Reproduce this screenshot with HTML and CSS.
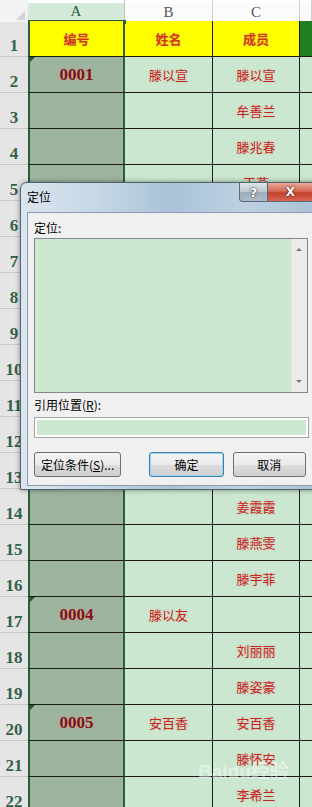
FILE: index.html
```html
<!DOCTYPE html>
<html lang="zh-CN">
<head>
    <meta charset="UTF-8">
    <meta name="viewport" content="width=device-width, initial-scale=1.0">
    <title>定位</title>
    <link rel="stylesheet" href="styles.css">
</head>
<body>
    <div class="sheet">
        <div class="row head-row">
            <div class="corner"></div>
            <div class="col-head col-a">A</div>
            <div class="col-head">B</div>
            <div class="col-head">C</div>
            <div class="col-head"></div>
        </div>

        <div class="row title-row">
            <div class="rh">1</div>
            <div class="cell a">编号</div>
            <div class="cell">姓名</div>
            <div class="cell">成员</div>
            <div class="cell d"></div>
        </div>
        <div class="row">
            <div class="rh">2</div>
            <div class="cell a flag"><span class="code">0001</span></div>
            <div class="cell">滕以宣</div>
            <div class="cell">滕以宣</div>
            <div class="cell d"></div>
        </div>
        <div class="row">
            <div class="rh">3</div>
            <div class="cell a"></div>
            <div class="cell"></div>
            <div class="cell">牟善兰</div>
            <div class="cell d"></div>
        </div>
        <div class="row">
            <div class="rh">4</div>
            <div class="cell a"></div>
            <div class="cell"></div>
            <div class="cell">滕兆春</div>
            <div class="cell d"></div>
        </div>
        <div class="row">
            <div class="rh">5</div>
            <div class="cell a"></div>
            <div class="cell"></div>
            <div class="cell">王燕</div>
            <div class="cell d"></div>
        </div>
        <div class="row">
            <div class="rh">6</div>
            <div class="cell a"></div>
            <div class="cell"></div>
            <div class="cell"></div>
            <div class="cell d"></div>
        </div>
        <div class="row">
            <div class="rh">7</div>
            <div class="cell a"></div>
            <div class="cell"></div>
            <div class="cell"></div>
            <div class="cell d"></div>
        </div>
        <div class="row">
            <div class="rh">8</div>
            <div class="cell a"></div>
            <div class="cell"></div>
            <div class="cell"></div>
            <div class="cell d"></div>
        </div>
        <div class="row">
            <div class="rh">9</div>
            <div class="cell a"></div>
            <div class="cell"></div>
            <div class="cell"></div>
            <div class="cell d"></div>
        </div>
        <div class="row">
            <div class="rh">10</div>
            <div class="cell a"></div>
            <div class="cell"></div>
            <div class="cell"></div>
            <div class="cell d"></div>
        </div>
        <div class="row">
            <div class="rh">11</div>
            <div class="cell a"></div>
            <div class="cell"></div>
            <div class="cell"></div>
            <div class="cell d"></div>
        </div>
        <div class="row">
            <div class="rh">12</div>
            <div class="cell a"></div>
            <div class="cell"></div>
            <div class="cell"></div>
            <div class="cell d"></div>
        </div>
        <div class="row">
            <div class="rh">13</div>
            <div class="cell a"></div>
            <div class="cell"></div>
            <div class="cell"></div>
            <div class="cell d"></div>
        </div>
        <div class="row">
            <div class="rh">14</div>
            <div class="cell a"></div>
            <div class="cell"></div>
            <div class="cell">姜霞霞</div>
            <div class="cell d"></div>
        </div>
        <div class="row">
            <div class="rh">15</div>
            <div class="cell a"></div>
            <div class="cell"></div>
            <div class="cell">滕燕雯</div>
            <div class="cell d"></div>
        </div>
        <div class="row">
            <div class="rh">16</div>
            <div class="cell a"></div>
            <div class="cell"></div>
            <div class="cell">滕宇菲</div>
            <div class="cell d"></div>
        </div>
        <div class="row">
            <div class="rh">17</div>
            <div class="cell a flag"><span class="code">0004</span></div>
            <div class="cell">滕以友</div>
            <div class="cell"></div>
            <div class="cell d"></div>
        </div>
        <div class="row">
            <div class="rh">18</div>
            <div class="cell a"></div>
            <div class="cell"></div>
            <div class="cell">刘丽丽</div>
            <div class="cell d"></div>
        </div>
        <div class="row">
            <div class="rh">19</div>
            <div class="cell a"></div>
            <div class="cell"></div>
            <div class="cell">滕姿豪</div>
            <div class="cell d"></div>
        </div>
        <div class="row">
            <div class="rh">20</div>
            <div class="cell a flag"><span class="code">0005</span></div>
            <div class="cell">安百香</div>
            <div class="cell">安百香</div>
            <div class="cell d"></div>
        </div>
        <div class="row">
            <div class="rh">21</div>
            <div class="cell a"></div>
            <div class="cell"></div>
            <div class="cell">滕怀安</div>
            <div class="cell d"></div>
        </div>
        <div class="row">
            <div class="rh">22</div>
            <div class="cell a"></div>
            <div class="cell"></div>
            <div class="cell">李希兰</div>
            <div class="cell d"></div>
        </div>
    </div>

    <!-- 水印 -->
    <div class="watermark">Baidu经验</div>

    <!-- 定位 对话框 -->
    <div class="dialog">
        <div class="dlg-title">
            <span class="dlg-caption">定位</span>
            <div class="dlg-ctrls">
                <span class="btn-help">?</span>
                <span class="btn-close">X</span>
            </div>
        </div>
        <div class="dlg-body">
            <div class="dlg-label">定位:</div>
            <div class="listbox">
                <div class="scrollbar">
                    <span class="arrow up"></span>
                    <span class="arrow down"></span>
                </div>
            </div>
            <div class="dlg-label gap">引用位置(<u>R</u>):</div>
            <div class="refbox"></div>
            <div class="dlg-buttons">
                <button class="btn btn-special">定位条件(<u>S</u>)...</button>
                <button class="btn btn-ok">确定</button>
                <button class="btn btn-cancel">取消</button>
            </div>
        </div>
    </div>
</body>
</html>
```

FILE: styles.css
```css
body {
    margin: 0;
    width: 312px;
    height: 807px;
    overflow: hidden;
    position: relative;
    background: #fff;
    font-family: "Noto Sans CJK SC", sans-serif;
}

.row {
    display: grid;
    grid-template-columns: 28px 97px 88px 87px 1fr;
    height: 36px;
}

.row > div {
    box-sizing: border-box;
    display: flex;
    align-items: center;
    justify-content: center;
}

/* 列标题 */
.head-row {
    height: 21px;
}

.corner {
    background: #f3f3f3;
    position: relative;
}

.corner::after {
    content: "";
    position: absolute;
    right: 3px;
    bottom: 2px;
    border-left: 9px solid transparent;
    border-bottom: 9px solid #d4d4d4;
}

.col-head {
    background: linear-gradient(#fff 3px, #fbfbfb 3px);
    border-right: 1px solid #cfcfcf;
    border-bottom: 1px solid #bdbdbd;
    font-family: "Liberation Serif", serif;
    font-size: 15px;
    color: #555;
    padding-top: 3px;
}

.head-row .col-a {
    background: linear-gradient(#fff 3px, #d3eadb 3px);
    border-right: 1px solid #b5cbbd;
    border-bottom: 2px solid #2c5e3d;
    color: #2a5a3c;
    position: relative;
}

.head-row .col-a::after {
    content: "";
    position: absolute;
    right: -2px;
    bottom: -4px;
    width: 4px;
    height: 4px;
    background: #2c5e3d;
}

/* 行号 */
.rh {
    background: #e5e5e5;
    border-bottom: 1px solid #c8c8c8;
    font-family: "Liberation Serif", serif;
    font-size: 17px;
    font-weight: bold;
    color: #33614a;
    line-height: 1;
    align-items: flex-end !important;
    padding-bottom: 2px;
}

/* 单元格 */
.cell {
    background: #cbe7cf;
    border-right: 1px solid #1b1b1b;
    border-bottom: 1px solid #1b1b1b;
    font-size: 13px;
    color: #c4261d;
    text-shadow: 0 0 2px rgba(240, 140, 140, 0.5);
}

.cell.a {
    background: #9db49f;
    border-left: 2px solid #2c5e3d;
    border-right: 2px solid #2c5e3d;
    position: relative;
}

.cell.d {
    border-right: none;
}

.title-row .cell {
    background: #ffff00;
    font-weight: bold;
    color: #cf3a12;
}

.title-row .cell.d {
    background: #1f7d22;
}

.code {
    font-family: "Liberation Serif", serif;
    font-size: 17px;
    font-weight: bold;
    color: #7c1414;
    text-shadow: 0 0 3px rgba(235, 150, 150, 0.8);
}

.flag::before {
    content: "";
    position: absolute;
    left: 0;
    top: 0;
    border-top: 5px solid #1d5a2c;
    border-right: 5px solid transparent;
}

/* 水印 */
.watermark {
    position: absolute;
    left: 198px;
    top: 756px;
    font-family: "Liberation Sans", "Noto Sans CJK SC", sans-serif;
    font-size: 19px;
    font-weight: bold;
    color: rgba(255, 255, 255, 0.45);
    white-space: nowrap;
}

/* 对话框 */
.dialog {
    position: absolute;
    left: 20px;
    top: 182px;
    width: 300px;
    box-sizing: border-box;
    padding: 0 5px 3px 6px;
    border: 1px solid #55636f;
    border-radius: 7px 7px 0 0;
    background: linear-gradient(to right, #dbe5ee 0%, #c6d7e5 25%, #aac3d9 50%, #bdd1e2 75%, #a9c1d6 100%);
    box-shadow: 0 0 5px rgba(0, 0, 0, 0.45);
}

.dlg-title {
    height: 29px;
    display: flex;
    align-items: flex-start;
}

.dlg-caption {
    font-size: 12px;
    line-height: 16px;
    padding-top: 6px;
    color: #000;
}

.dlg-ctrls {
    margin-left: auto;
    display: flex;
    height: 19px;
}

.btn-help,
.btn-close {
    display: flex;
    align-items: center;
    justify-content: center;
    box-sizing: border-box;
    font-family: "DejaVu Sans", sans-serif;
    font-weight: bold;
    color: #fff;
    border: 1px solid #5a6a7a;
    border-top: none;
}

.btn-help {
    width: 29px;
    font-size: 13px;
    border-radius: 0 0 0 4px;
    background: linear-gradient(#dfe6ec, #b9c6d1 50%, #9cacb9 51%, #aebdca);
    text-shadow: 0 0 2px #333, 0 0 1px #333;
}

.btn-close {
    width: 46px;
    font-size: 12px;
    border-left: none;
    background: linear-gradient(#e8a798, #d66a56 45%, #c3402b 55%, #d66652);
    text-shadow: 0 0 2px #4a1008, 0 0 1px #4a1008;
}

.dlg-body {
    background: #f0f0f0;
    border: 1px solid #8a9bac;
    padding: 7px 7px 8px 6px;
}

.dlg-label {
    font-size: 12px;
    line-height: 16px;
    color: #000;
}

.dlg-label.gap {
    margin-top: 4px;
}

.listbox {
    margin-top: 2px;
    width: 274px;
    height: 155px;
    box-sizing: border-box;
    border: 1px solid #828790;
    background: #cce8cf;
    display: flex;
    justify-content: flex-end;
}

.scrollbar {
    width: 15px;
    background: #ececec;
    border-left: 1px solid #e2e2e2;
    position: relative;
}

.arrow {
    position: absolute;
    left: 4px;
    border-left: 3px solid transparent;
    border-right: 3px solid transparent;
}

.arrow.up {
    top: 9px;
    border-bottom: 3px solid #7a7a7a;
}

.arrow.down {
    bottom: 9px;
    border-top: 3px solid #7a7a7a;
}

.refbox {
    margin-top: 4px;
    width: 275px;
    height: 21px;
    box-sizing: border-box;
    border: 1px solid #a5a5a5;
    box-shadow: inset 0 0 0 2px #fff;
    background: #cce8cf;
}

.dlg-buttons {
    margin-top: 14px;
    display: flex;
}

.btn {
    height: 25px;
    box-sizing: border-box;
    border: 1px solid #707070;
    border-radius: 3px;
    background: linear-gradient(#f3f3f3, #ebebeb 50%, #dddddd 51%, #cfcfcf);
    font-family: "Noto Sans CJK SC", sans-serif;
    font-size: 12px;
    color: #000;
    padding: 0;
}

.btn-special {
    width: 88px;
}

.btn-ok {
    width: 75px;
    margin-left: 28px;
    border-color: #3c7fb1;
    box-shadow: inset 0 0 0 1px #9fd3ef;
}

.btn-cancel {
    width: 74px;
    margin-left: 9px;
}
```
